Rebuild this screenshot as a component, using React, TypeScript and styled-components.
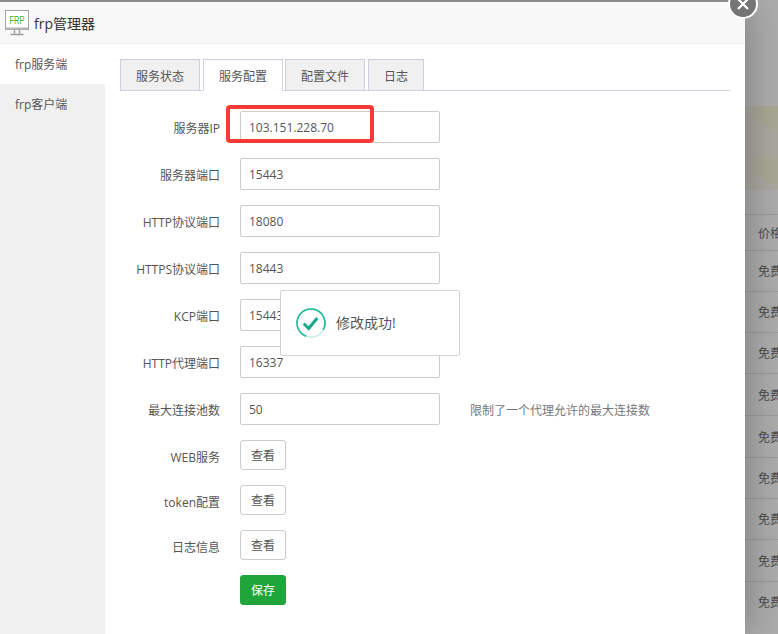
import React from "react";
import styled, { createGlobalStyle } from "styled-components";

const Global = createGlobalStyle`
  html, body { margin: 0; padding: 0; height: 100%; overflow: hidden; background: #adadad; }
  body { font-family: "Open Sans", "Noto Sans CJK SC", "Liberation Sans", sans-serif; font-size: 12px; color: #555; }
  * { box-sizing: border-box; }
`;

const Page = styled.div`
  display: flex;
  width: 778px;
  height: 634px;
  overflow: hidden;
  position: relative;
  background: #adadad;
`;
const Modal = styled.div`
  position: relative;
  z-index: 1;
  width: 745px;
  height: 632px;
  margin-top: 2px;
  flex: none;
  background: #fff;
  display: flex;
  flex-direction: column;
  box-shadow: 1px 1px 40px rgba(0, 0, 0, 0.3);
`;
const TopEdge = styled.div`
  position: absolute;
  left: 0;
  top: -2px;
  width: 100%;
  height: 2px;
  background: #8c8c8c;
`;
const Close = styled.div`
  position: absolute;
  right: -13px;
  top: -13px;
  width: 30px;
  height: 30px;
  border-radius: 50%;
  background: #757575;
  border: 2px solid #fff;
  display: flex;
  align-items: center;
  justify-content: center;
`;
const TitleBar = styled.div`
  height: 42px;
  flex: none;
  background: #f8f8f8;
  border-bottom: 1px solid #eee;
  display: flex;
  align-items: center;
  padding-left: 5px;
  gap: 5px;
  font-size: 14px;
  color: #333;
`;
const Body = styled.div`
  flex: 1;
  display: flex;
  min-height: 0;
`;
const Sidebar = styled.div`
  width: 105px;
  flex: none;
  background: #f0f0f0;
`;
const SideItem = styled.div<{ $active?: boolean }>`
  height: 40px;
  line-height: 42px;
  padding-left: 15px;
  color: #555;
  background: ${(p) => (p.$active ? "#fff" : "transparent")};
`;
const Main = styled.div`
  flex: 1;
  padding: 15px 15px 0;
  position: relative;
`;
const Tabs = styled.div`
  display: flex;
  height: 32px;
  border-bottom: 1px solid #d0cfe0;
`;
const Tab = styled.div<{ $active?: boolean; $w: number; $ml: number }>`
  width: ${(p) => p.$w}px;
  margin-left: ${(p) => p.$ml}px;
  height: 32px;
  line-height: 33px;
  text-align: center;
  color: #555;
  background: ${(p) => (p.$active ? "#fff" : "#f0f0f0")};
  border: 1px solid #d0cfe0;
  border-bottom: 1px solid ${(p) => (p.$active ? "#fff" : "#d0cfe0")};
`;
const Form = styled.div`
  margin-top: 20px;
  display: flex;
  flex-direction: column;
`;
const Row = styled.div<{ $gap: number }>`
  display: flex;
  align-items: center;
  margin-bottom: ${(p) => p.$gap}px;
`;
const Label = styled.div<{ $drop?: number }>`
  width: 100px;
  margin-right: 20px;
  padding-top: ${(p) => p.$drop ?? 2}px;
  text-align: right;
  color: #555;
  flex: none;
  white-space: nowrap;
  display: flex;
  justify-content: flex-end;
`;
const Field = styled.div`
  width: 200px;
  height: 32px;
  line-height: 32px;
  padding-left: 8px;
  border: 1px solid #ccc;
  border-radius: 2px;
  color: #555;
  background: #fff;
  flex: none;
`;
const Help = styled.div`
  margin-left: 30px;
  padding-top: 2px;
  color: #777;
`;
const Btn = styled.div<{ $primary?: boolean }>`
  width: 46px;
  height: 30px;
  line-height: 30px;
  text-align: center;
  border-radius: 3px;
  border: 1px solid ${(p) => (p.$primary ? "#20a53a" : "#ccc")};
  background: ${(p) => (p.$primary ? "#20a53a" : "#fff")};
  color: ${(p) => (p.$primary ? "#fff" : "#555")};
  flex: none;
`;
const Highlight = styled.div`
  position: absolute;
  left: 121px;
  top: 61px;
  width: 148px;
  height: 38px;
  border: 4px solid #f93a3a;
  border-radius: 4px;
  pointer-events: none;
`;
const Toast = styled.div`
  position: absolute;
  left: 175px;
  top: 246px;
  width: 180px;
  height: 66px;
  background: #fff;
  border: 1px solid #d3d3d3;
  border-radius: 2px;
  display: flex;
  align-items: center;
  padding-left: 15px;
  gap: 10px;
  font-size: 14px;
  color: #555;
`;
const ToastText = styled.span`
  padding-bottom: 3px;
`;
const Backdrop = styled.div`
  flex: 1;
  display: flex;
  flex-direction: column;
  padding-top: 106px;
  color: #4c4c4c;
  white-space: nowrap;
  overflow: hidden;
`;
const Banner = styled.div`
  height: 84px;
  flex: none;
  background: #aaa9a0;
  margin-bottom: 24px;
`;
const Cell = styled.div<{ $h: number }>`
  height: ${(p) => p.$h}px;
  flex: none;
  padding-left: 13px;
  display: flex;
  align-items: center;
  border-top: 1px solid #9a9a9a;
`;

const fields = [
  ["服务器IP", "103.151.228.70"],
  ["服务器端口", "15443"],
  ["HTTP协议端口", "18080"],
  ["HTTPS协议端口", "18443"],
  ["KCP端口", "15443"],
  ["HTTP代理端口", "16337"],
];
const heights = [36, 41, 41, 41, 42, 42, 41, 41, 42, 41];

export default function App() {
  return (
    <Page>
      <Global />
      <Modal>
        <TopEdge />
        <Close>
          <svg width="14" height="14" viewBox="0 0 14 14">
            <path d="M2 2 12 12M12 2 2 12" stroke="#fff" strokeWidth="2.2" />
          </svg>
        </Close>
        <TitleBar>
          <svg width="24" height="26" viewBox="0 0 24 26">
            <rect x="0.5" y="0.5" width="23" height="19" fill="#fff" stroke="#a5a5a5" />
            <rect x="1" y="17.5" width="22" height="2" fill="#b5b5b5" />
            <text x="12" y="13.5" textAnchor="middle" fontSize="10.5" fill="#3cae3c" fontFamily="Liberation Sans" textLength="15" lengthAdjust="spacingAndGlyphs">FRP</text>
            <path d="M9.5 20v3.5M14.5 20v3.5M5.5 24.5h13" stroke="#9a9a9a" strokeWidth="1.4" fill="none" />
          </svg>
          frp管理器
        </TitleBar>
        <Body>
          <Sidebar>
            <SideItem $active>frp服务端</SideItem>
            <SideItem>frp客户端</SideItem>
          </Sidebar>
          <Main>
            <Tabs>
              <Tab $w={80} $ml={0}>服务状态</Tab>
              <Tab $w={80} $ml={3} $active>服务配置</Tab>
              <Tab $w={80} $ml={2}>配置文件</Tab>
              <Tab $w={56} $ml={3}>日志</Tab>
            </Tabs>
            <Form>
              {fields.map(([l, v]) => (
                <Row $gap={15} key={l}>
                  <Label>{l}</Label>
                  <Field>{v}</Field>
                </Row>
              ))}
              <Row $gap={15}>
                <Label>最大连接池数</Label>
                <Field>50</Field>
                <Help>限制了一个代理允许的最大连接数</Help>
              </Row>
              <Row $gap={15}>
                <Label $drop={3}>WEB服务</Label>
                <Btn>查看</Btn>
              </Row>
              <Row $gap={15}>
                <Label $drop={3}>token配置</Label>
                <Btn>查看</Btn>
              </Row>
              <Row $gap={15}>
                <Label $drop={3}>日志信息</Label>
                <Btn>查看</Btn>
              </Row>
              <Row $gap={0}>
                <Label />
                <Btn $primary>保存</Btn>
              </Row>
            </Form>
            <Highlight />
            <Toast>
              <svg width="30" height="30" viewBox="0 0 30 30">
                <circle cx="15" cy="15" r="14" fill="none" stroke="#c4ece2" strokeWidth="1.4" />
                <circle cx="15" cy="15" r="14" fill="none" stroke="#1abc9c" strokeWidth="1.6" strokeDasharray="68 20" transform="rotate(110 15 15)" />
                <path d="M7.7 15.5l5 5 8.6-10.5" fill="none" stroke="#1aa88e" strokeWidth="3" />
              </svg>
              <ToastText>修改成功!</ToastText>
            </Toast>
          </Main>
        </Body>
      </Modal>
      <Backdrop>
        <Banner>
          <svg width="33" height="84" viewBox="0 0 33 84">
            <path d="M9 0H33V25H32A25 25 0 0 1 9 0Z" fill="#aaa997" />
            <path d="M9 52H33V78H32A25 25 0 0 1 9 52Z" fill="#aaa997" />
          </svg>
        </Banner>
        {heights.map((h, i) => (
          <Cell $h={h} key={i}>{i === 0 ? "价格" : "免费"}</Cell>
        ))}
      </Backdrop>
    </Page>
  );
}
